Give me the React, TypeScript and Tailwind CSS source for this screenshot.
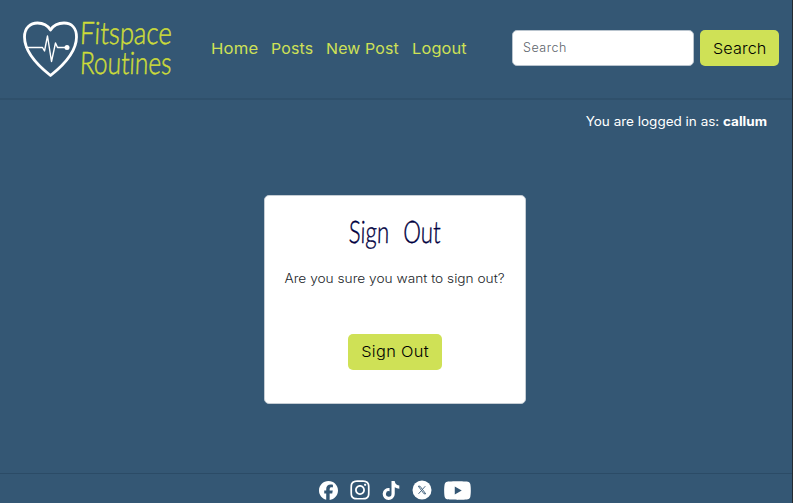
import { FaFacebook, FaTiktok, FaYoutube, FaInstagram } from "react-icons/fa6";

const links = [
  { label: "Home", style: "w-[47px]", text: "scale-x-[1.110]" },
  { label: "Posts", style: "w-[41px]", text: "scale-x-[1.060]" },
  { label: "New Post", style: "w-[73px]", text: "scale-x-[1.060]" },
  { label: "Logout", style: "w-[55px]", text: "scale-x-[1.090]" },
];

function Logo() {
  return (
    <div className="flex items-start">
      <svg width="58" height="62" viewBox="0 0 58 62" aria-hidden="true" className="shrink-0">
        <g fill="none" stroke="#fff" strokeLinecap="round" strokeLinejoin="round">
          <path
            strokeWidth="2.8"
            d="M28.500 57.500C19 50 2.500 36 2.500 19C2.500 9.500 8.500 5 15.500 5C21.500 5 26 8 28.500 12C31 8 36 5 42 5C49.500 5 54.500 10 54.500 19C54.500 36 38 50 28.500 57.500Z"
          />
          <path strokeWidth="1.4" d="M4 29.500H20.500L22.500 33L25.500 18L29.500 43.500L33.500 25L35.500 29.500H43" />
        </g>
        <circle cx="45" cy="29.500" r="2.500" fill="#fff" />
      </svg>
      <div className="-mt-[1px] flex w-[94px] flex-col items-start font-['Lato',sans-serif] text-[31px] leading-[30px] font-light whitespace-nowrap text-[#cddc39] [font-variant-ligatures:none] [-webkit-text-stroke:0.500px_#cddc39]">
        <span className="origin-left scale-x-[0.830] -skew-x-3">Fitspace</span>
        <span className="origin-left scale-x-[0.790] -skew-x-3">Routines</span>
      </div>
    </div>
  );
}

function XBadge() {
  return (
    <svg width="20" height="20" viewBox="0 0 20 20" aria-label="X">
      <circle cx="10" cy="10" r="9.500" fill="#fff" />
      <path d="M6.300 6.200H8L13.700 13.800H12ZM13.300 6.200L10.500 9.300M9.300 10.700L6.500 13.800" fill="none" stroke="#345774" strokeWidth="0.9" />
    </svg>
  );
}

export default function App() {
  return (
    <div className="flex h-[503px] w-[793px] flex-col overflow-hidden border-r border-[#252b30] bg-[#345774] font-['Inter',sans-serif]">
      <header className="flex h-[100px] shrink-0 items-start border-b-2 border-[#2f506b] pr-[13px] pl-[22px]">
        <div className="mt-[18px] w-[152px] shrink-0">
          <Logo />
        </div>
        <nav className="mt-[37px] ml-[36.500px] flex gap-[13.500px] text-[15px] leading-6 whitespace-nowrap text-[#cfe156]">
          {links.map((link) => (
            <a key={link.label} href="#" className={link.style}>
              <span className={`inline-block origin-left tracking-[0.150px] ${link.text}`}>{link.label}</span>
            </a>
          ))}
        </nav>
        <form className="mt-[30px] ml-auto flex gap-[6px]">
          <input
            placeholder="Search"
            className="h-[36px] w-[182px] rounded-[5px] border border-[#b9c4ce] bg-white px-[10px] pb-[2px] text-[12.500px] font-light tracking-[0.500px] placeholder:text-[#5c646b]"
          />
          <button type="button" className="h-[36px] w-[79px] rounded-[5px] bg-[#cfe156] pt-[2px] text-[15px] font-light text-black">
            <span className="inline-block scale-x-[1.080] tracking-[0.100px]">Search</span>
          </button>
        </form>
      </header>
      <p className="mt-[12px] mr-[25px] origin-right scale-x-[1.080] text-right text-[12.500px] leading-[20px] whitespace-nowrap text-white">
        You are logged in as: <strong className="font-bold">callum</strong>
      </p>
      <main className="mt-[63px] ml-[264px] flex h-[209px] w-[262px] shrink-0 flex-col items-center rounded-[5px] border border-[#c5cdd4] bg-white">
        <h1 className="mt-[14px] h-[42px] scale-x-[0.720] -skew-x-2 font-['Lato',sans-serif] text-[31px] leading-[42px] font-light whitespace-nowrap text-[#000040] [word-spacing:11px] [-webkit-text-stroke:0.400px_#000040]">
          Sign Out
        </h1>
        <p className="mt-[17px] scale-x-[1.095] text-[12.500px] leading-5 font-light whitespace-nowrap text-[#212529]">
          Are you sure you want to sign out?
        </p>
        <button type="button" className="mt-[45px] h-[36px] w-[94px] rounded-[5px] bg-[#cfe156] text-[15px] font-light text-black">
          <span className="inline-block scale-x-[1.090] tracking-[0.300px]">Sign Out</span>
        </button>
      </main>
      <footer className="mt-auto flex h-[30px] shrink-0 items-center border-t border-[#2b4b66] pt-[3px] pl-[319px] text-white">
        <FaFacebook className="h-[19px] w-[19px]" />
        <FaInstagram className="ml-[11px] h-[22px] w-[22px]" />
        <FaTiktok className="ml-[11px] h-[19px] w-[18px]" />
        <div className="ml-[12px]">
          <XBadge />
        </div>
        <FaYoutube className="ml-[11px] h-[25px] w-[29px]" />
      </footer>
    </div>
  );
}
